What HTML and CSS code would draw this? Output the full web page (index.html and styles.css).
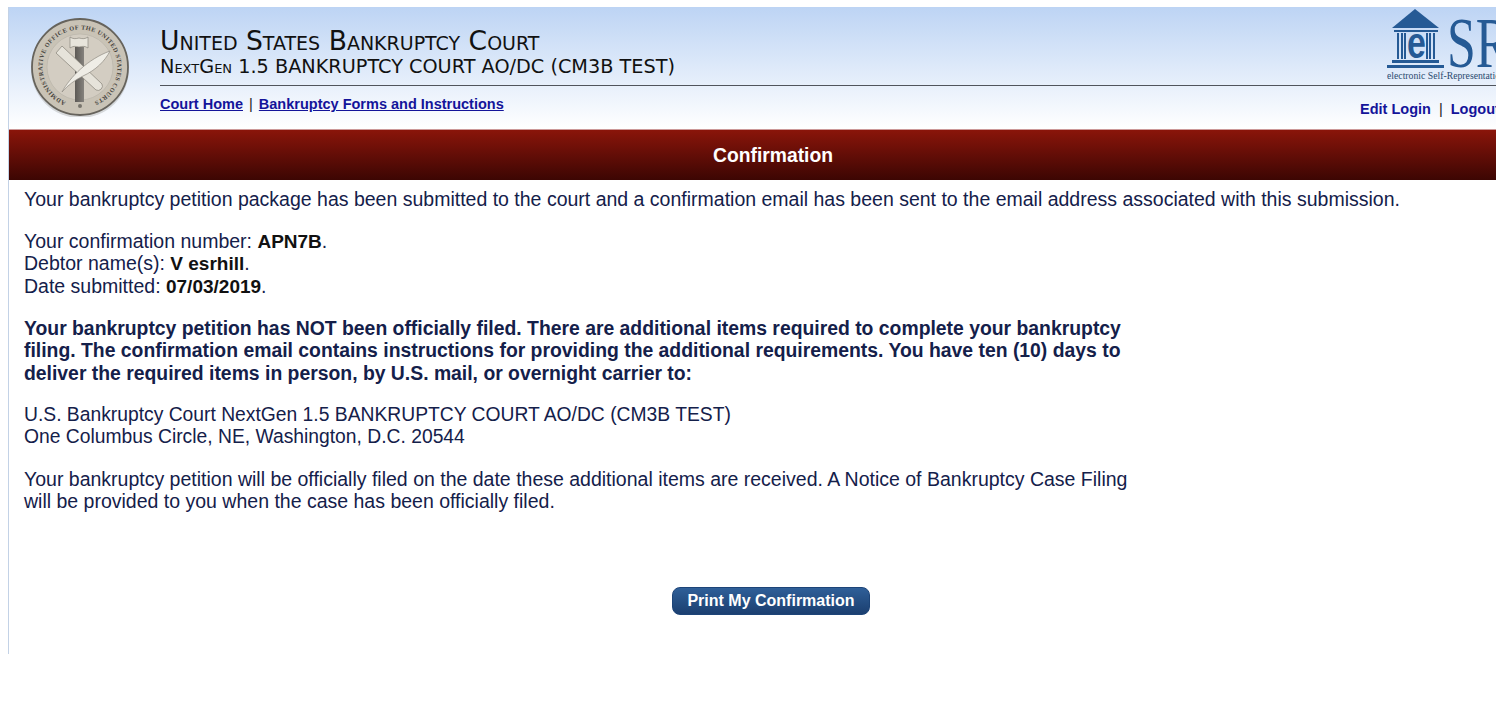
FILE: index.html
```html
<!DOCTYPE html>
<html>
    <head>
        <title>Confirmation</title>
        <link rel="stylesheet" href="styles.css">
    </head>
    <body>
        <div class="page">
            <div class="inner">
                <div class="header">
                    <svg class="seal" width="100" height="100" viewBox="0 0 100 100">
                        <defs>
                            <path id="sealRing" d="M35 84.400a37.500 37.500 0 1 1 30 0"/>
                            <linearGradient id="sealRod" x1="0" y1="0" x2="1" y2="0">
                                <stop offset="0" stop-color="#5c5955"/>
                                <stop offset="1" stop-color="#85827d"/>
                            </linearGradient>
                        </defs>
                        <circle cx="50" cy="52" r="49" fill="#aeb0b0" opacity=".45"/>
                        <circle cx="50" cy="50" r="48" fill="#c9c3b6" stroke="#66635c" stroke-width="1.8"/>
                        <circle cx="50" cy="50" r="33" fill="#d3cdc2" stroke="#b3afa5" stroke-width=".5"/>
                        <text class="seal-text"><textPath href="#sealRing" startOffset="50%" text-anchor="middle">ADMINISTRATIVE OFFICE OF THE UNITED STATES COURTS</textPath></text>
                        <rect x="45" y="30" width="9" height="55" fill="url(#sealRod)"/>
                        <path d="M40 20c3 2 5 2 9 1 4 1 6 1 9-1v11c-3-2-5-2-9-1-4-1-6-1-9 1z" fill="#e8e5dc" stroke="#7d7a72" stroke-width=".6"/>
                        <circle cx="50" cy="89" r="2" fill="#77746c"/>
                        <path d="M26 36l6-7 40 38a4.500 4.500 0 0 1-6 6z" fill="#e6e3da" stroke="#8f8b82" stroke-width=".8"/>
                        <path d="M32 75C40 60 58 42 80 34c-5 10-14 19-27 25-8 4-15 9-21 16z" fill="#efede6" stroke="#8f8b82" stroke-width=".7"/>
                    </svg>
                    <div class="titles">
                        <div class="court-name">United States Bankruptcy Court</div>
                        <div class="court-sub">NextGen 1.5 BANKRUPTCY COURT AO/DC (CM3B TEST)</div>
                        <div class="rule"></div>
                        <div class="nav-row">
                            <div class="nav">
                                <a href="#">Court Home</a>
                                <span class="sep">|</span>
                                <a href="#">Bankruptcy Forms and Instructions</a>
                            </div>
                            <div class="user-nav">
                                <a href="#">Edit Login</a>
                                <span class="sep">|</span>
                                <a href="#">Logout</a>
                            </div>
                        </div>
                    </div>
                    <svg class="logo" width="150" height="76" viewBox="0 0 150 76">
                        <path d="M28 1L5 20h47z" fill="#255a95"/>
                        <rect x="7" y="22" width="44" height="2" fill="#255a95"/>
                        <rect x="10" y="25" width="2" height="26" fill="#255a95"/>
                        <rect x="14" y="25" width="2" height="26" fill="#255a95"/>
                        <rect x="17" y="25" width="2" height="26" fill="#255a95"/>
                        <rect x="39" y="25" width="2" height="26" fill="#255a95"/>
                        <rect x="42" y="25" width="2" height="26" fill="#255a95"/>
                        <rect x="46" y="25" width="2" height="26" fill="#255a95"/>
                        <rect x="5" y="52" width="47" height="3" fill="#255a95"/>
                        <rect x="0" y="57" width="57" height="3" fill="#255a95"/>
                        <text class="logo-e" transform="translate(20 50) scale(.77 1)">e</text>
                        <text class="logo-sr" transform="translate(60 59) scale(.72 1)">SRL</text>
                        <text class="logo-tag" x="0" y="71" textLength="118" lengthAdjust="spacingAndGlyphs">electronic Self-Representation</text>
                    </svg>
                </div>
                <div class="banner">Confirmation</div>
                <div class="content">
                    <p>Your bankruptcy petition package has been submitted to the court and a confirmation email has been sent to the email address associated with this submission.</p>
                    <p>Your confirmation number: <b>APN7B</b>.<br>
                    Debtor name(s): <b>V esrhill</b>.<br>
                    Date submitted: <b>07/03/2019</b>.</p>
                    <p class="notice">Your bankruptcy petition has NOT been officially filed. There are additional items required to complete your bankruptcy filing. The confirmation email contains instructions for providing the additional requirements. You have ten (10) days to deliver the required items in person, by U.S. mail, or overnight carrier to:</p>
                    <p class="address">U.S. Bankruptcy Court NextGen 1.5 BANKRUPTCY COURT AO/DC (CM3B TEST)<br>
                    One Columbus Circle, NE, Washington, D.C. 20544</p>
                    <p class="narrow">Your bankruptcy petition will be officially filed on the date these additional items are received. A Notice of Bankruptcy Case Filing will be provided to you when the case has been officially filed.</p>
                </div>
                <div class="actions">
                    <input class="print-button" type="button" value="Print My Confirmation">
                </div>
            </div>
        </div>
    </body>
</html>
```

FILE: styles.css
```css
html, body {
    overflow: hidden;
}
body {
    margin: 7px 6px 0 8px;
    font-family: "Liberation Sans", Arial, sans-serif;
    font-size: 19.5px;
    line-height: 22.4px;
    color: #14204a;
    background: #fff;
}
.page {
    position: relative;
    height: 647px;
    border-left: 1px solid #c3d2e6;
    overflow: hidden;
}
.inner {
    width: 1528px;
}
.header {
    display: flex;
    height: 122px;
    box-sizing: border-box;
    padding: 10px 0 0 21px;
    background: linear-gradient(#bdd4f4, #fff);
}
.seal {
    flex: none;
    margin-right: 30px;
}
.seal-text {
    font-family: "Liberation Serif", serif;
    font-size: 6.2px;
    font-weight: bold;
    letter-spacing: .5px;
    fill: #45423c;
}
.titles {
    flex: 1;
    min-width: 0;
}
.court-name {
    font-family: "DejaVu Sans", Verdana, sans-serif;
    font-size: 26.6px;
    line-height: 28px;
    font-variant: small-caps;
    color: #111;
    margin-top: 10px;
}
.court-sub {
    font-family: "DejaVu Sans", Verdana, sans-serif;
    font-size: 19.25px;
    line-height: 22px;
    font-variant: small-caps;
    color: #111;
    margin-top: 1px;
}
.rule {
    height: 1px;
    margin-top: 7px;
    background: #50545c;
}
.nav-row {
    display: flex;
    justify-content: space-between;
}
.nav {
    margin-top: 7px;
    font-size: 14.5px;
    font-weight: bold;
    line-height: 22px;
}
.nav a, .user-nav a {
    color: #14149a;
}
.sep {
    font-weight: normal;
    color: #222;
    margin: 0 2px;
}
.user-nav {
    margin: 12px 0 0 0;
    width: 177px;
    font-size: 14.5px;
    font-weight: bold;
    line-height: 22px;
    white-space: nowrap;
}
.user-nav a {
    text-decoration: none;
}
.user-nav .sep {
    margin: 0 4px;
}
.logo {
    position: absolute;
    left: 1378px;
    top: 1px;
}
.logo-e {
    font-family: "Liberation Sans", sans-serif;
    font-size: 44px;
    font-weight: bold;
    fill: #255a95;
}
.logo-sr {
    font-family: "Liberation Serif", serif;
    font-size: 72px;
    fill: #255a95;
}
.logo-tag {
    font-family: "Liberation Serif", serif;
    font-size: 11px;
    fill: #2a4a70;
}
.banner {
    height: 50px;
    border-top: 1px solid #c99;
    background: linear-gradient(#8a150a, #3c0603);
    color: #fff;
    font-size: 19.3px;
    font-weight: bold;
    line-height: 51px;
    text-align: center;
}
.content {
    padding: 8px 0 0 15px;
}
.content p {
    margin: 0 0 19.6px;
}
.content b {
    font-size: 19px;
    line-height: 1;
    color: #111;
}
.content .notice {
    width: 1110px;
    font-size: 19.37px;
    font-weight: bold;
}
.content .address {
    font-size: 19.3px;
}
.narrow {
    width: 1110px;
}
.actions {
    margin-top: 74px;
    text-align: center;
    padding-right: 4px;
}
.print-button {
    height: 28px;
    width: 198px;
    padding: 0;
    border: 1px solid #1d4478;
    border-radius: 8px;
    background: linear-gradient(#2f5f98, #1b3f70);
    color: #fff;
    font-family: "Liberation Sans", Arial, sans-serif;
    font-size: 16px;
    font-weight: bold;
    cursor: pointer;
}
```
